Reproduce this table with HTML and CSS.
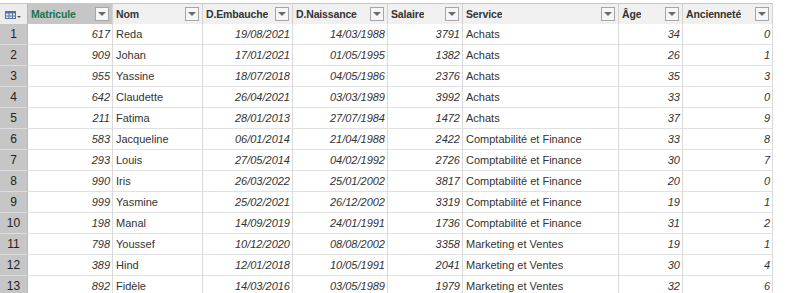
FILE: index.html
```html
<!DOCTYPE html>
<html lang="fr">
<head>
<meta charset="utf-8">
<title>Employés</title>
<link rel="stylesheet" href="styles.css">
</head>
<body>
<div class="sheet">
  <div class="grid" role="table">
    <div class="row head" role="row">
      <div class="cell corner">
        <svg class="tbl-icon" width="16" height="9" viewBox="0 0 16 9">
          <rect x="0.5" y="0.5" width="10" height="7" fill="none" stroke="#4f73a8"/>
          <rect x="0" y="0" width="11" height="2.5" fill="#4f73a8"/>
          <line x1="0" y1="5" x2="11" y2="5" stroke="#4f73a8"/>
          <line x1="4" y1="2" x2="4" y2="8" stroke="#4f73a8"/>
          <line x1="7.5" y1="2" x2="7.5" y2="8" stroke="#4f73a8"/>
          <path d="M12 5 L16 5 L14 7 Z" fill="#555"/>
        </svg>
      </div>
      <div class="cell hcell sel"><span class="hlabel">Matricule</span><span class="dd"></span></div>
      <div class="cell hcell"><span class="hlabel">Nom</span><span class="dd"></span></div>
      <div class="cell hcell"><span class="hlabel">D.Embauche</span><span class="dd"></span></div>
      <div class="cell hcell"><span class="hlabel">D.Naissance</span><span class="dd"></span></div>
      <div class="cell hcell"><span class="hlabel">Salaire</span><span class="dd"></span></div>
      <div class="cell hcell"><span class="hlabel">Service</span><span class="dd"></span></div>
      <div class="cell hcell"><span class="hlabel">Âge</span><span class="dd"></span></div>
      <div class="cell hcell"><span class="hlabel">Ancienneté</span><span class="dd"></span></div>
    </div>

    <div class="row" role="row"><div class="cell num">1</div><div class="cell r">617</div><div class="cell">Reda</div><div class="cell r">19/08/2021</div><div class="cell r">14/03/1988</div><div class="cell r">3791</div><div class="cell">Achats</div><div class="cell r">34</div><div class="cell r">0</div></div>
    <div class="row" role="row"><div class="cell num">2</div><div class="cell r">909</div><div class="cell">Johan</div><div class="cell r">17/01/2021</div><div class="cell r">01/05/1995</div><div class="cell r">1382</div><div class="cell">Achats</div><div class="cell r">26</div><div class="cell r">1</div></div>
    <div class="row" role="row"><div class="cell num">3</div><div class="cell r">955</div><div class="cell">Yassine</div><div class="cell r">18/07/2018</div><div class="cell r">04/05/1986</div><div class="cell r">2376</div><div class="cell">Achats</div><div class="cell r">35</div><div class="cell r">3</div></div>
    <div class="row" role="row"><div class="cell num">4</div><div class="cell r">642</div><div class="cell">Claudette</div><div class="cell r">26/04/2021</div><div class="cell r">03/03/1989</div><div class="cell r">3992</div><div class="cell">Achats</div><div class="cell r">33</div><div class="cell r">0</div></div>
    <div class="row" role="row"><div class="cell num">5</div><div class="cell r">211</div><div class="cell">Fatima</div><div class="cell r">28/01/2013</div><div class="cell r">27/07/1984</div><div class="cell r">1472</div><div class="cell">Achats</div><div class="cell r">37</div><div class="cell r">9</div></div>
    <div class="row" role="row"><div class="cell num">6</div><div class="cell r">583</div><div class="cell">Jacqueline</div><div class="cell r">06/01/2014</div><div class="cell r">21/04/1988</div><div class="cell r">2422</div><div class="cell">Comptabilité et Finance</div><div class="cell r">33</div><div class="cell r">8</div></div>
    <div class="row" role="row"><div class="cell num">7</div><div class="cell r">293</div><div class="cell">Louis</div><div class="cell r">27/05/2014</div><div class="cell r">04/02/1992</div><div class="cell r">2726</div><div class="cell">Comptabilité et Finance</div><div class="cell r">30</div><div class="cell r">7</div></div>
    <div class="row" role="row"><div class="cell num">8</div><div class="cell r">990</div><div class="cell">Iris</div><div class="cell r">26/03/2022</div><div class="cell r">25/01/2002</div><div class="cell r">3817</div><div class="cell">Comptabilité et Finance</div><div class="cell r">20</div><div class="cell r">0</div></div>
    <div class="row" role="row"><div class="cell num">9</div><div class="cell r">999</div><div class="cell">Yasmine</div><div class="cell r">25/02/2021</div><div class="cell r">26/12/2002</div><div class="cell r">3319</div><div class="cell">Comptabilité et Finance</div><div class="cell r">19</div><div class="cell r">1</div></div>
    <div class="row" role="row"><div class="cell num">10</div><div class="cell r">198</div><div class="cell">Manal</div><div class="cell r">14/09/2019</div><div class="cell r">24/01/1991</div><div class="cell r">1736</div><div class="cell">Comptabilité et Finance</div><div class="cell r">31</div><div class="cell r">2</div></div>
    <div class="row" role="row"><div class="cell num">11</div><div class="cell r">798</div><div class="cell">Youssef</div><div class="cell r">10/12/2020</div><div class="cell r">08/08/2002</div><div class="cell r">3358</div><div class="cell">Marketing et Ventes</div><div class="cell r">19</div><div class="cell r">1</div></div>
    <div class="row" role="row"><div class="cell num">12</div><div class="cell r">389</div><div class="cell">Hind</div><div class="cell r">12/01/2018</div><div class="cell r">10/05/1991</div><div class="cell r">2041</div><div class="cell">Marketing et Ventes</div><div class="cell r">30</div><div class="cell r">4</div></div>
    <div class="row" role="row"><div class="cell num">13</div><div class="cell r">892</div><div class="cell">Fidèle</div><div class="cell r">14/03/2016</div><div class="cell r">03/05/1989</div><div class="cell r">1979</div><div class="cell">Marketing et Ventes</div><div class="cell r">32</div><div class="cell r">6</div></div>
  </div>
</div>
</body>
</html>
```

FILE: styles.css
```css
html, body {
  margin: 0;
  padding: 0;
  background: #ffffff;
  overflow: hidden;
}
body {
  width: 804px;
  height: 293px;
  font-family: "Liberation Sans", Arial, sans-serif;
  font-size: 11px;
  color: #333333;
}
.sheet {
  padding-top: 3px;
}
.grid {
  width: 773px;
}
.row {
  display: grid;
  grid-template-columns: 28px 85px 90px 90px 95px 75px 156px 64px 90px;
  height: 21px;
}
.cell {
  box-sizing: border-box;
  border-right: 1px solid #dadada;
  border-bottom: 1px solid #e1e1e1;
  padding: 0 3px;
  display: flex;
  align-items: center;
  white-space: nowrap;
  overflow: hidden;
  line-height: 20px;
}
.cell.r {
  justify-content: flex-end;
  font-style: italic;
  padding-right: 2px;
}
.cell.num {
  background: #c6c6c6;
  justify-content: center;
  color: #222222;
  font-size: 12px;
  border-bottom-color: #dedede;
  border-right-color: #b8b8b8;
}
.head .cell {
  background: #f0f0f0;
  border-top: 1px solid #c8c8c8;
  border-bottom: none;
  border-right-color: #d2d2d2;
}
.head .corner {
  justify-content: flex-start;
  padding-left: 5px;
  background: #ececec;
  border-right-color: #b8b8b8;
}
.tbl-icon {
  display: block;
  margin-top: 2px;
}
.hcell {
  justify-content: space-between;
  font-weight: bold;
  font-size: 10.5px;
  letter-spacing: -0.15px;
  color: #333333;
}
.head .hcell.sel {
  background: #c6c6c6;
  color: #217346;
}
.hlabel {
  overflow: hidden;
}
.dd {
  position: relative;
  flex: 0 0 auto;
  box-sizing: border-box;
  width: 14px;
  height: 14px;
  border: 1px solid #a6a6a6;
  background: #f6f6f6;
  margin-right: 0;
  margin-top: -1px;
}
.dd::after {
  content: "";
  position: absolute;
  left: 2px;
  top: 4px;
  border-left: 4px solid transparent;
  border-right: 4px solid transparent;
  border-top: 4px solid #6a6a6a;
}
```
